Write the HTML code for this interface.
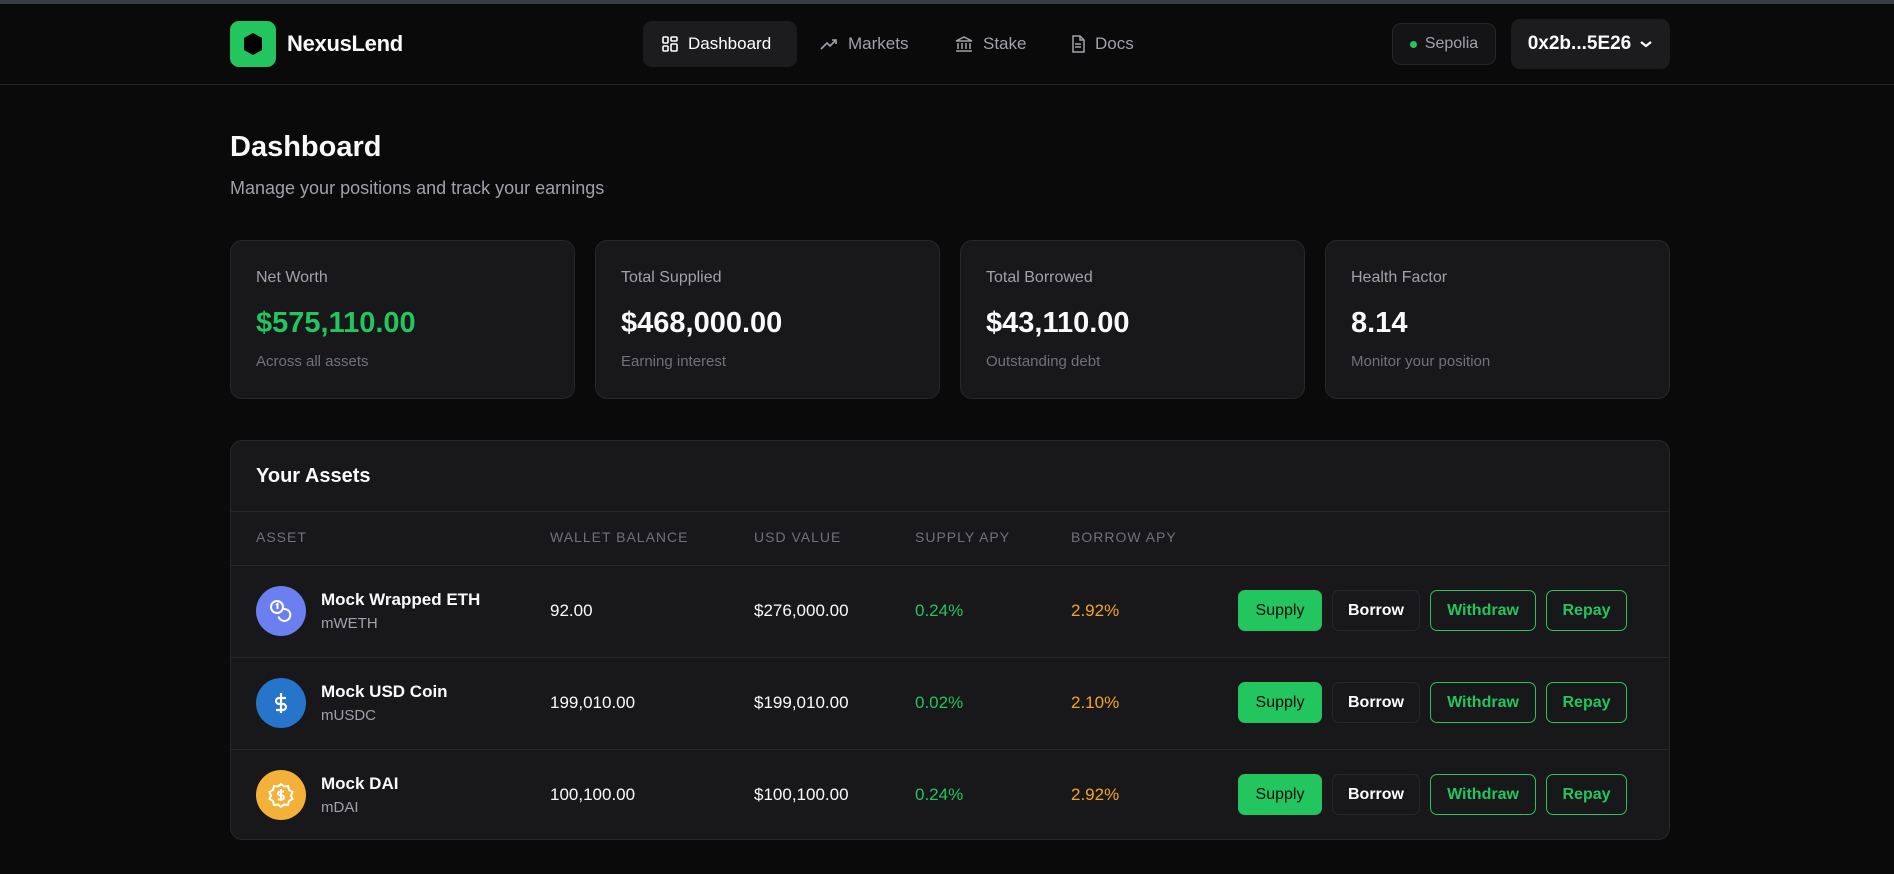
<!DOCTYPE html>
<html><head><meta charset="utf-8"><style>
*{box-sizing:border-box;margin:0;padding:0}
body{width:1894px;height:874px;background:#0a0a0b;font-family:"Liberation Sans",sans-serif;color:#fafafa;overflow:hidden;position:relative}
.topbar{position:absolute;left:0;top:0;width:1894px;height:4px;background:#3a3d41}
.hdr{position:absolute;left:0;top:4px;width:1894px;height:81px;border-bottom:1px solid #27272a}
.abs{position:absolute}
.logo{left:230px;top:21px;width:46px;height:46px;background:#22c55e;border-radius:9px}
.brand{left:287px;top:31px;font-size:22px;font-weight:bold;letter-spacing:-0.3px}
.nav{top:21px;height:46px;display:flex;align-items:center;font-size:17px;color:#a1a1aa;gap:9px}
.nav.active{background:#1c1c1f;border-radius:9px;color:#fff;padding:0 18px}
.pill{left:1392px;top:23px;width:104px;height:42px;border:1px solid #27272a;background:#141416;border-radius:9px;font-size:16px;color:#a1a1aa;display:flex;align-items:center;justify-content:center;gap:8px}
.wallet{left:1511px;top:19px;width:159px;height:50px;background:#1c1c1f;border-radius:9px;font-size:19px;font-weight:bold;display:flex;align-items:center;justify-content:center;gap:8px}
h1{position:absolute;left:230px;top:131px;font-size:29px;font-weight:bold}
.sub{left:230px;top:178px;font-size:18px;color:#a1a1aa}
.card{top:240px;width:345px;height:159px;background:#18181b;border:1px solid #27272a;border-radius:12px;padding:0 25px}
.card .l{position:absolute;left:25px;top:28px;font-size:16px;color:#a1a1aa}
.card .v{position:absolute;left:25px;top:66px;font-size:29px;font-weight:bold}
.card .s{position:absolute;left:25px;top:112px;font-size:15px;color:#71717a}
.tbl{left:230px;top:440px;width:1440px;height:400px;background:#18181b;border:1px solid #27272a;border-radius:12px;overflow:hidden}
.tt{left:25px;top:24px;font-size:20px;font-weight:bold}
.line{left:0;width:1440px;height:1px;background:#27272a}
.th{top:88px;font-size:14px;color:#71717a;letter-spacing:1px}
.row{left:0;width:1440px;height:92px}
.ic{left:25px;top:21px;width:50px;height:50px;border-radius:50%;display:flex;align-items:center;justify-content:center}
.nm{left:90px;top:25px;font-size:17px;font-weight:bold}
.sy{left:90px;top:50px;font-size:15px;color:#a1a1aa}
.cell{top:36px;font-size:17px}
.btn{top:25px;height:41px;border-radius:7px;font-size:16px;display:flex;align-items:center;justify-content:center}
.b1{left:1007px;width:84px;background:#22c55e;color:#0a0a0b}
.b2{left:1101px;width:88px;border:1px solid #27272a;font-weight:bold;color:#fff}
.b3{left:1199px;width:106px;border:1px solid #22c55e;color:#22c55e;font-weight:600}
.b4{left:1315px;width:81px;border:1px solid #22c55e;color:#22c55e;font-weight:600}
.g{color:#22c55e}.y{color:#f5a524}
</style></head><body>
<div class="topbar"></div>
<div class="hdr"></div>
<div class="abs logo"><svg width="46" height="46" viewBox="0 0 46 46"><polygon points="23,12 32,17 32,29 23,34 14,29 14,17" fill="#000"/></svg></div>
<div class="abs brand">NexusLend</div>
<div class="abs nav active" style="left:643px;width:154px"><svg width="18" height="18" viewBox="0 0 18 18" fill="none" stroke="#fff" stroke-width="1.6"><rect x="2" y="2" width="5" height="6" rx="1"/><rect x="10" y="2" width="6" height="4" rx="1"/><rect x="10" y="9" width="6" height="7" rx="1"/><rect x="2" y="11" width="5" height="5" rx="1"/></svg>Dashboard</div>
<div class="abs nav" style="left:819px"><svg width="20" height="18" viewBox="0 0 20 18" fill="none" stroke="#a1a1aa" stroke-width="1.6"><path d="M2 14l6-6 3 3 6-6M13 5h4v4"/></svg>Markets</div>
<div class="abs nav" style="left:954px"><svg width="20" height="18" viewBox="0 0 20 18" fill="none" stroke="#a1a1aa" stroke-width="1.5"><path d="M2 6l8-4 8 4zM4 8v6M8 8v6M12 8v6M16 8v6M2 16h16"/></svg>Stake</div>
<div class="abs nav" style="left:1070px"><svg width="16" height="18" viewBox="0 0 16 18" fill="none" stroke="#a1a1aa" stroke-width="1.5"><path d="M3 1h7l4 4v12H3zM10 1v4h4M5 9h6M5 12h6"/></svg>Docs</div>
<div class="abs pill"><span style="width:7px;height:7px;border-radius:50%;background:#22c55e"></span>Sepolia</div>
<div class="abs wallet">0x2b...5E26 <svg width="14" height="10" viewBox="0 0 14 10"><path d="M2 3l5 4 5-4" stroke="#fff" stroke-width="2.2" fill="none"/></svg></div>

<h1>Dashboard</h1>
<div class="abs sub">Manage your positions and track your earnings</div>

<div class="abs card" style="left:230px"><div class="l">Net Worth</div><div class="v g">$575,110.00</div><div class="s">Across all assets</div></div>
<div class="abs card" style="left:595px"><div class="l">Total Supplied</div><div class="v">$468,000.00</div><div class="s">Earning interest</div></div>
<div class="abs card" style="left:960px"><div class="l">Total Borrowed</div><div class="v">$43,110.00</div><div class="s">Outstanding debt</div></div>
<div class="abs card" style="left:1325px"><div class="l">Health Factor</div><div class="v">8.14</div><div class="s">Monitor your position</div></div>

<div class="abs tbl">
<div class="abs tt">Your Assets</div>
<div class="abs line" style="top:70px"></div>
<div class="abs th" style="left:25px">ASSET</div>
<div class="abs th" style="left:319px">WALLET BALANCE</div>
<div class="abs th" style="left:523px">USD VALUE</div>
<div class="abs th" style="left:684px">SUPPLY APY</div>
<div class="abs th" style="left:840px">BORROW APY</div>
<div class="abs line" style="top:124px"></div>

<div class="abs row" style="top:124px">
<div class="abs ic" style="background:#6b7ff0"><svg width="28" height="28" viewBox="0 0 28 28" fill="none" stroke="#fff" stroke-width="2"><circle cx="10" cy="10" r="6"/><path d="M16.5 12a6 6 0 1 1-5 7.5"/><path d="M9 8l1.5-1v5"/></svg></div>
<div class="abs nm">Mock Wrapped ETH</div><div class="abs sy">mWETH</div>
<div class="abs cell" style="left:319px">92.00</div>
<div class="abs cell" style="left:523px">$276,000.00</div>
<div class="abs cell g" style="left:684px">0.24%</div>
<div class="abs cell y" style="left:840px">2.92%</div>
<div class="abs btn b1">Supply</div><div class="abs btn b2">Borrow</div><div class="abs btn b3">Withdraw</div><div class="abs btn b4">Repay</div>
</div>
<div class="abs line" style="top:216px"></div>
<div class="abs row" style="top:216px">
<div class="abs ic" style="background:#2775ca"><svg width="28" height="28" viewBox="0 0 28 28" fill="none" stroke="#fff" stroke-width="2.2"><path d="M14 4v20M19 9h-7a3 3 0 0 0 0 6h4a3 3 0 0 1 0 6H9"/></svg></div>
<div class="abs nm">Mock USD Coin</div><div class="abs sy">mUSDC</div>
<div class="abs cell" style="left:319px">199,010.00</div>
<div class="abs cell" style="left:523px">$199,010.00</div>
<div class="abs cell g" style="left:684px">0.02%</div>
<div class="abs cell y" style="left:840px">2.10%</div>
<div class="abs btn b1">Supply</div><div class="abs btn b2">Borrow</div><div class="abs btn b3">Withdraw</div><div class="abs btn b4">Repay</div>
</div>
<div class="abs line" style="top:308px"></div>
<div class="abs row" style="top:308px">
<div class="abs ic" style="background:#f4b13a"><svg width="30" height="30" viewBox="0 0 30 30" fill="none" stroke="#fff" stroke-width="2"><path d="M15 4l3 2.5 4-.5 1 4 3.5 2-1.5 3.5 1.5 3.5-3.5 2-1 4-4-.5-3 2.5-3-2.5-4 .5-1-4-3.5-2 1.5-3.5-1.5-3.5 3.5-2 1-4 4 .5z"/><path d="M15 9v12M18 11.5h-4a2 2 0 0 0 0 4h2a2 2 0 0 1 0 4h-4"/></svg></div>
<div class="abs nm">Mock DAI</div><div class="abs sy">mDAI</div>
<div class="abs cell" style="left:319px">100,100.00</div>
<div class="abs cell" style="left:523px">$100,100.00</div>
<div class="abs cell g" style="left:684px">0.24%</div>
<div class="abs cell y" style="left:840px">2.92%</div>
<div class="abs btn b1">Supply</div><div class="abs btn b2">Borrow</div><div class="abs btn b3">Withdraw</div><div class="abs btn b4">Repay</div>
</div>
</div>
</body></html>
